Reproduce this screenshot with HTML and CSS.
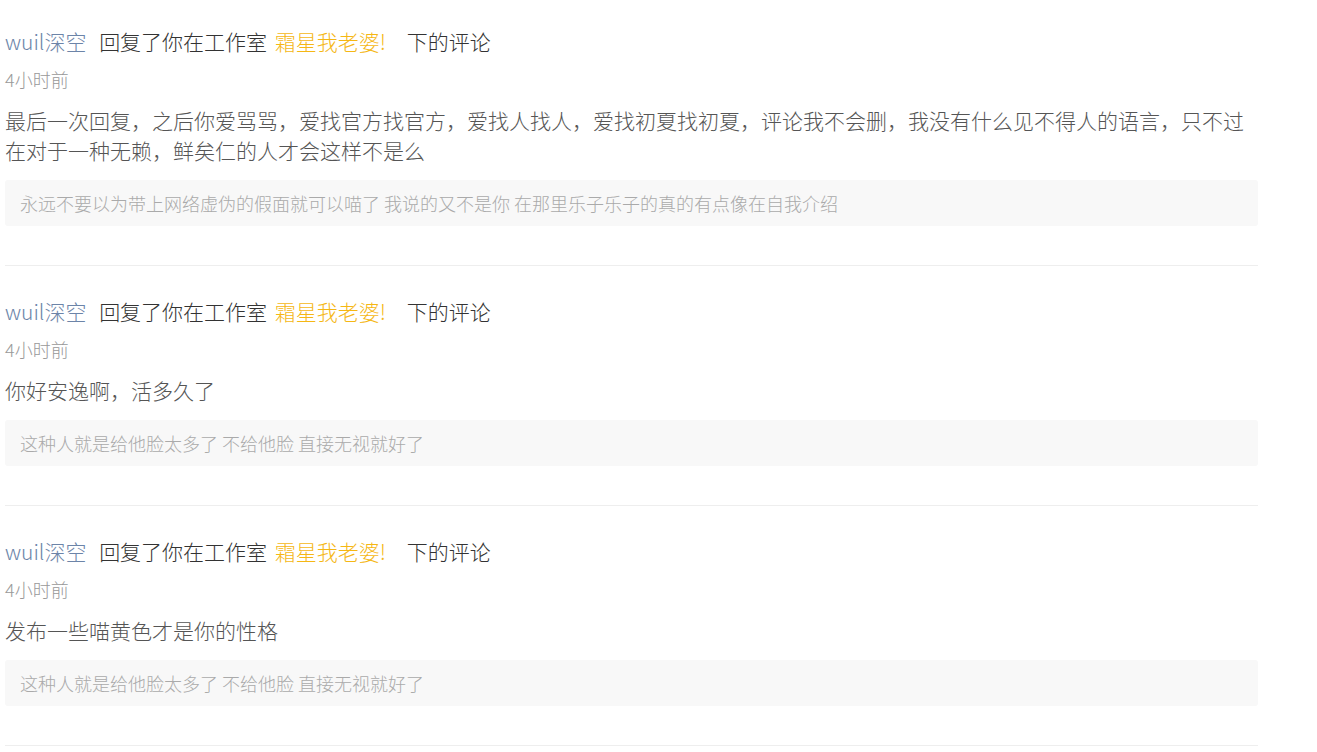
FILE: index.html
```html
<!DOCTYPE html>
<html lang="zh-CN">

<head>
    <meta charset="UTF-8">
    <meta name="viewport" content="width=device-width, initial-scale=1.0">
    <title>回复</title>
    <link rel="stylesheet" href="styles.css">
</head>

<body>
    <ul class="reply-list">
        <li class="reply">
            <div class="reply-head">
                <a class="user" href="#">wuil深空</a>
                <span class="action">回复了你在工作室</span>
                <a class="studio" href="#">霜星我老婆!</a>
                <span class="action">下的评论</span>
            </div>
            <div class="time">4小时前</div>
            <p class="content">最后一次回复，之后你爱骂骂，爱找官方找官方，爱找人找人，爱找初夏找初夏，评论我不会删，我没有什么见不得人的语言，只不过在对于一种无赖，鲜矣仁的人才会这样不是么</p>
            <div class="quote">永远不要以为带上网络虚伪的假面就可以喵了 我说的又不是你 在那里乐子乐子的真的有点像在自我介绍</div>
        </li>
        <li class="reply">
            <div class="reply-head">
                <a class="user" href="#">wuil深空</a>
                <span class="action">回复了你在工作室</span>
                <a class="studio" href="#">霜星我老婆!</a>
                <span class="action">下的评论</span>
            </div>
            <div class="time">4小时前</div>
            <p class="content">你好安逸啊，活多久了</p>
            <div class="quote">这种人就是给他脸太多了 不给他脸 直接无视就好了</div>
        </li>
        <li class="reply">
            <div class="reply-head">
                <a class="user" href="#">wuil深空</a>
                <span class="action">回复了你在工作室</span>
                <a class="studio" href="#">霜星我老婆!</a>
                <span class="action">下的评论</span>
            </div>
            <div class="time">4小时前</div>
            <p class="content">发布一些喵黄色才是你的性格</p>
            <div class="quote">这种人就是给他脸太多了 不给他脸 直接无视就好了</div>
        </li>
    </ul>
</body>

</html>
```

FILE: styles.css
```css
body {
    margin: 0;
    padding: 0 5px;
    background-color: #fff;
    font-family: "Noto Sans CJK SC", "Noto Sans", sans-serif;
    font-weight: 300;
}

.reply-list {
    list-style: none;
    margin: 0;
    padding: 0;
    width: 1253px;
}

.reply {
    padding: 34px 0 39px;
    border-bottom: 1px solid #eeeeee;
}

.reply:first-child {
    padding-top: 30px;
}

.reply-head {
    margin-top: -1px;
    font-size: 21px;
    line-height: 24px;
    white-space: nowrap;
}

.reply-head a {
    text-decoration: none;
}

.user {
    color: #6c84a8;
    margin-right: 8px;
}

.action {
    color: #333;
}

.studio {
    color: #f5b714;
    margin: 0 16px 0 3px;
}

.time {
    margin-top: 13px;
    font-size: 18px;
    line-height: 26px;
    color: #999;
}

.content {
    margin: 13px 0 0;
    font-size: 21px;
    line-height: 30px;
    color: #555;
}

.quote {
    margin-top: 15px;
    padding: 12px 15px;
    font-size: 18px;
    line-height: 22px;
    color: #aaa;
    background-color: #f8f8f8;
    border-radius: 3px;
}
```
